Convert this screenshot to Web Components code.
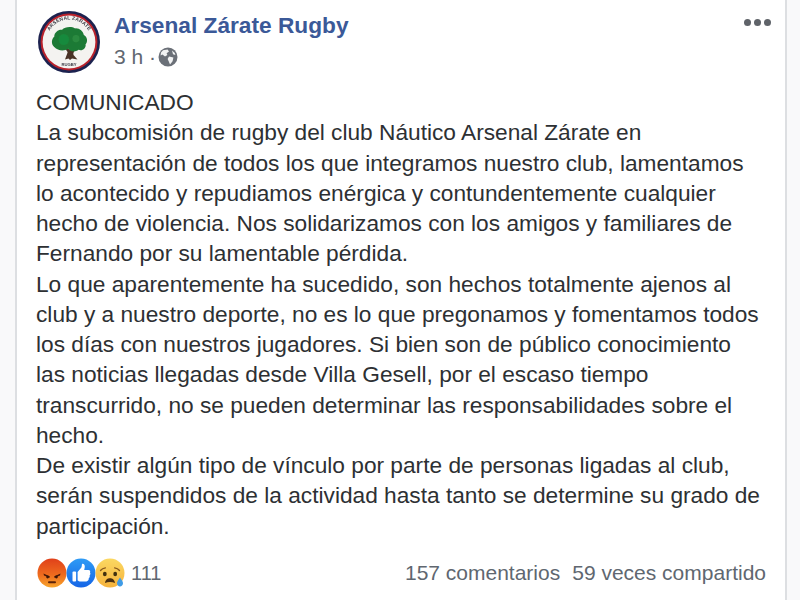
<!DOCTYPE html>
<html>
<head>
<meta charset="utf-8">
<title>Arsenal Zárate Rugby</title>
<style>
html, body { margin: 0; padding: 0; background: #f9f9fa; }
body { width: 800px; height: 600px; overflow: hidden; font-family: "Liberation Sans", Arial, sans-serif; }
</style>
</head>
<body>
<fb-post>
  <post-header slot="header" name="Arsenal Zárate Rugby" time="3 h"></post-header>
  <post-line>COMUNICADO</post-line>
  <post-line>La subcomisión de rugby del club Náutico Arsenal Zárate en</post-line>
  <post-line>representación de todos los que integramos nuestro club, lamentamos</post-line>
  <post-line>lo acontecido y repudiamos enérgica y contundentemente cualquier</post-line>
  <post-line>hecho de violencia. Nos solidarizamos con los amigos y familiares de</post-line>
  <post-line>Fernando por su lamentable pérdida.</post-line>
  <post-line>Lo que aparentemente ha sucedido, son hechos totalmente ajenos al</post-line>
  <post-line>club y a nuestro deporte, no es lo que pregonamos y fomentamos todos</post-line>
  <post-line>los días con nuestros jugadores. Si bien son de público conocimiento</post-line>
  <post-line>las noticias llegadas desde Villa Gesell, por el escaso tiempo</post-line>
  <post-line>transcurrido, no se pueden determinar las responsabilidades sobre el</post-line>
  <post-line>hecho.</post-line>
  <post-line>De existir algún tipo de vínculo por parte de personas ligadas al club,</post-line>
  <post-line>serán suspendidos de la actividad hasta tanto se determine su grado de</post-line>
  <post-line>participación.</post-line>
  <post-footer slot="footer" count="111" comments="157 comentarios" shares="59 veces compartido"></post-footer>
</fb-post>

<script>
class FbPost extends HTMLElement {
    constructor() {
        super();
        this.attachShadow({ mode: "open" });
        this.shadowRoot.innerHTML = `
            <style>
                :host{
                    display: flex;
                    flex-direction: column;
                    box-sizing: border-box;
                    width: 772px;
                    height: 600px;
                    margin-left: 15px;
                    background: #fff;
                    border-left: 2px solid #dddfe2;
                    border-right: 2px solid #dddfe2;
                }
                .body{
                    padding: 11px 0 0 19px;
                    color: #2d3033;
                    font-size: 22.7px;
                    line-height: 30.25px;
                }
            </style>
            <slot name="header"></slot>
            <div class="body"><slot></slot></div>
            <slot name="footer"></slot>
        `;
    }
}

class PostLine extends HTMLElement {
    constructor() {
        super();
        this.attachShadow({ mode: "open" });
        this.shadowRoot.innerHTML = `
            <style>
                :host{ display: block; white-space: nowrap; }
            </style>
            <slot></slot>
        `;
    }
}

class PostHeader extends HTMLElement {
    constructor() {
        super();
        this.attachShadow({ mode: "open" });
    }
    connectedCallback() {
        this.shadowRoot.innerHTML = `
            <style>
                :host{
                    display: flex;
                    align-items: flex-start;
                    padding: 10px 0 0 20px;
                    height: 76px;
                    box-sizing: border-box;
                    position: relative;
                }
                .info{ margin-left: 13px; }
                .name{
                    color: #3b5998;
                    font-size: 22.7px;
                    font-weight: bold;
                    line-height: 30px;
                }
                .meta{
                    display: flex;
                    align-items: center;
                    margin-top: 2px;
                    color: #616770;
                    font-size: 21px;
                    line-height: 30px;
                }
                .meta svg{ margin-left: 2px; }
                .dots{
                    position: absolute;
                    top: 19px;
                    right: 14px;
                    display: flex;
                    gap: 3px;
                }
                .dots i{
                    width: 7px;
                    height: 7px;
                    border-radius: 50%;
                    background: #5f6369;
                }
            </style>
            <club-logo></club-logo>
            <div class="info">
                <div class="name">${this.getAttribute("name")}</div>
                <div class="meta">${this.getAttribute("time")} ·
                    <svg width="20" height="20" viewBox="0 0 20 20">
                        <circle cx="10" cy="10" r="9.5" fill="#6b7078"/>
                        <path d="M5 3.2 9.6 2.4 11 4.6 8.6 6.2 9.4 8 7 9.6 4.4 7.6 2.6 8.4 3 5.6Z" fill="#f1f2f3"/>
                        <path d="M11 9.6 15.4 10.6 14.6 14.2 12 17.4 10.8 14.4 9.6 12Z" fill="#f1f2f3"/>
                        <path d="M14 3.6 16.8 6 17.4 8 15 7.2Z" fill="#f1f2f3"/>
                    </svg>
                </div>
            </div>
            <div class="dots"><i></i><i></i><i></i></div>
        `;
    }
}

class ClubLogo extends HTMLElement {
    constructor() {
        super();
        this.attachShadow({ mode: "open" });
        this.shadowRoot.innerHTML = `
            <style>
                :host{ display: block; width: 64px; height: 64px; flex: none; }
                svg{ display: block; }
                text{ font-family: "Liberation Sans", Arial, sans-serif; font-weight: bold; fill: #3a3a44; }
            </style>
            <svg width="64" height="64" viewBox="0 0 64 64">
                <defs>
                    <filter id="soft" x="-5%" y="-5%" width="110%" height="110%"><feGaussianBlur stdDeviation="0.5"/></filter>
                    <path id="arcTop" d="M9.5 32a22.5 22.5 0 0 1 45 0"/>
                </defs>
                <g filter="url(#soft)">
                    <circle cx="32" cy="32" r="31" fill="#1c2350"/>
                    <circle cx="32" cy="32" r="28.4" fill="#b8202c"/>
                    <circle cx="32" cy="32" r="26.4" fill="#f4f3f0"/>
                    <path d="M28 49.5 31.5 40 36 40 36.5 45 40.5 49.5 35 48.5 33 50 31.5 48.5Z" fill="#4a3325"/>
                    <path d="M27 37 32 44 34 40Z" fill="#4a3325"/>
                    <path d="M40 37 35 45 36 38Z" fill="#4a3325"/>
                    <g transform="translate(4.2 3.5) scale(.87 .93)">
                        <path d="M15 36C11 33 12 27 15 25 15 20 20 17 24 17.5 27 14 35 13.5 39 16 44 15.5 48 19 49 23 53 25 54 30 51 33 52 37 47 41 43 39 39 42 33 41 31 38 26 41 19 40 15 36Z" fill="#1f7a35"/>
                        <circle cx="26" cy="28" r="6" fill="#188a3c"/>
                        <circle cx="40" cy="27" r="4" fill="#2c8a40"/>
                    </g>
                    <text font-size="5" letter-spacing="0.1"><textPath href="#arcTop" startOffset="50%" text-anchor="middle">ARSENAL ZÁRATE</textPath></text>
                    <text font-size="4.2" x="32" y="56" text-anchor="middle">RUGBY</text>
                </g>
            </svg>
        `;
    }
}

class ReactionIcon extends HTMLElement {
    static get art() {
        return {
            angry: `
                <circle cx="15" cy="15" r="14.5" fill="url(#angryFill)"/>
                <path d="M6.5 15.5 13 18.4 12.6 19.8 7 17.6ZM23.5 15.5 17 18.4 17.4 19.8 23 17.6Z" fill="#4a1a08"/>
                <circle cx="10.6" cy="19" r="1.4" fill="#3b1508"/>
                <circle cx="19.4" cy="19" r="1.4" fill="#3b1508"/>
                <rect x="11" y="23.2" width="8" height="2" rx="1" fill="#5a2208"/>`,
            like: `
                <circle cx="15" cy="15" r="14.5" fill="url(#likeFill)"/>
                <rect x="6.5" y="13.5" width="3.6" height="10" rx="1" fill="#fff"/>
                <path d="M11.6 14 15.4 9.6C15.8 8.8 15.8 7 16 6 17.8 5.4 19 7 18.8 9L18.2 12 22.4 12C24 12 24.6 13.4 24 14.6 24.7 15.6 24.4 16.8 23.6 17.4 24 18.4 23.6 19.6 22.8 20 23 21.6 22 23.4 20.4 23.4L14.6 23.4C13.2 23.4 12.4 22.8 11.6 22.4Z" fill="#fff"/>`,
            sad: `
                <circle cx="15" cy="15" r="14.5" fill="url(#sadFill)"/>
                <path d="M5.5 12.5C6.8 10.8 8.4 10 10.4 9.8M24.5 12.5C23.2 10.8 21.6 10 19.6 9.8" fill="none" stroke="#8a5a1e" stroke-width="1.3" stroke-linecap="round"/>
                <ellipse cx="9.8" cy="16" rx="1.9" ry="2.3" fill="#41300f"/>
                <ellipse cx="20.2" cy="16" rx="1.9" ry="2.3" fill="#41300f"/>
                <path d="M10 25C10.6 21.4 12.6 20.2 15 20.2 17.4 20.2 19.4 21.4 20 25 17 23.6 13 23.6 10 25Z" fill="#4a2f10"/>
                <path d="M25 19.5C26.6 22 28 23.4 28 25.2 28 27.2 26.6 28.4 25 28.4 23.4 28.4 22 27.2 22 25.2 22 23.4 23.4 22 25 19.5Z" fill="#3f9be6"/>`
        };
    }
    constructor() {
        super();
        this.attachShadow({ mode: "open" });
    }
    connectedCallback() {
        const kind = this.getAttribute("kind");
        this.shadowRoot.innerHTML = `
            <style>
                :host{
                    display: block;
                    width: 30px;
                    height: 30px;
                    margin-right: -1px;
                }
                svg{ display: block; filter: blur(.3px); }
            </style>
            <svg width="30" height="30" viewBox="0 0 30 30">
                <defs>
                    <linearGradient id="angryFill" x1="0" y1="0" x2="0" y2="1">
                        <stop offset="0" stop-color="#e0401a"/>
                        <stop offset="0.55" stop-color="#ee6a1e"/>
                        <stop offset="1" stop-color="#f8a52c"/>
                    </linearGradient>
                    <linearGradient id="likeFill" x1="0" y1="0" x2="0" y2="1">
                        <stop offset="0" stop-color="#2f9bf5"/>
                        <stop offset="1" stop-color="#1565e6"/>
                    </linearGradient>
                    <linearGradient id="sadFill" x1="0" y1="0" x2="0" y2="1">
                        <stop offset="0" stop-color="#fbd862"/>
                        <stop offset="1" stop-color="#f6b33c"/>
                    </linearGradient>
                </defs>
                ${ReactionIcon.art[kind]}
            </svg>
        `;
    }
}

class PostFooter extends HTMLElement {
    constructor() {
        super();
        this.attachShadow({ mode: "open" });
    }
    connectedCallback() {
        this.shadowRoot.innerHTML = `
            <style>
                :host{
                    display: flex;
                    align-items: center;
                    justify-content: space-between;
                    margin-top: 17px;
                    padding: 0 19px 0 20px;
                    color: #606770;
                    font-size: 21px;
                    line-height: 30px;
                }
                .reactions{ display: flex; align-items: center; }
                .count{ margin-left: 7px; font-size: 20px; }
                .stats{ display: flex; gap: 12px; }
            </style>
            <div class="reactions">
                <reaction-icon kind="angry"></reaction-icon>
                <reaction-icon kind="like"></reaction-icon>
                <reaction-icon kind="sad"></reaction-icon>
                <span class="count">${this.getAttribute("count")}</span>
            </div>
            <div class="stats">
                <span>${this.getAttribute("comments")}</span>
                <span>${this.getAttribute("shares")}</span>
            </div>
        `;
    }
}

customElements.define("fb-post", FbPost);
customElements.define("post-line", PostLine);
customElements.define("post-header", PostHeader);
customElements.define("club-logo", ClubLogo);
customElements.define("reaction-icon", ReactionIcon);
customElements.define("post-footer", PostFooter);
</script>
</body>
</html>
